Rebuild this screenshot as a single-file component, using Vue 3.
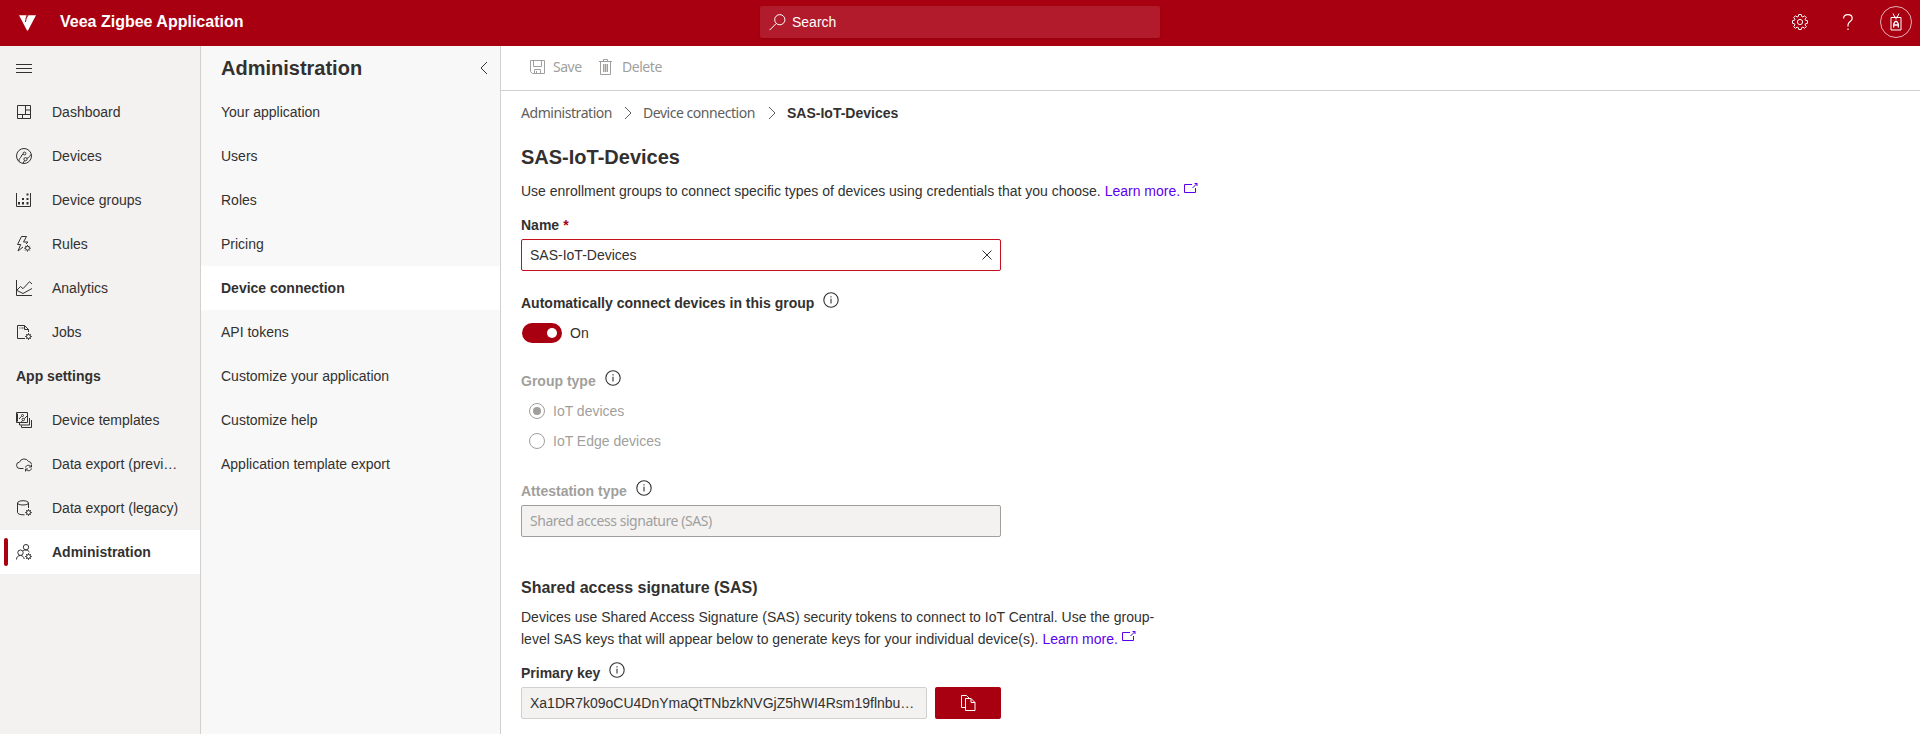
<script setup>
const gear = 'M11.5 8.9v1.2M11.5 14.4v1.2M8.2 12.2h1.2M13.6 12.2h1.2M9.2 9.9l.8.8M13 13.7l.8.8M9.2 14.5l.8-.8M13 10.7l.8-.8M13.5 12.2a2 2 0 1 1-4 0a2 2 0 0 1 4 0'
const gearLow = 'M12.5 9.2v1.3M12.5 14.5v1.3M9.2 12.5h1.3M14.5 12.5h1.3M10.2 10.2l.9.9M13.9 13.9l.9.9M10.2 14.8l.9-.9M13.9 11.1l.9-.9M14.5 12.5a2 2 0 1 1-4 0a2 2 0 0 1 4 0'

const nav = [
  { label: 'Dashboard', d: 'M1.5 1.5h13v13h-13zM1.5 10.5h13M9.5 1.5v9M9.5 6h5M6.5 10.5v4' },
  { label: 'Devices', d: 'M15.5 8a7.5 7.5 0 1 1-15 0a7.5 7.5 0 0 1 15 0M9.9 5.5a1.4 1.4 0 1 1-2.8 0a1.4 1.4 0 0 1 2.8 0M7.3 6.2C4.5 7 5.8 9 4.4 9.8c-1.2.7-1.6 1.7-1.2 3.8M11.1 11.2a1.6 1.6 0 1 1-3.2 0a1.6 1.6 0 0 1 3.2 0M10.8 10.3C14 9.6 12.8 7.8 15.3 6.5M8.5 12.5L7 15.3' },
  { label: 'Device groups', d: 'M.5 1v13.5h14V1', fill: 'M2 10h2v2.5H2zM6 10h2v2.5H6zM10.5 10h2v2.5h-2zM6 6h2v2H6zM10.5 6h2v2h-2zM10.5 1.5h2v2h-2z' },
  { label: 'Rules', d: 'M5.5.5h5L7.5 6h4.500L10 8M5.500.5L1.500 8.500h3.200L2 15l5-4', gear: gear },
  { label: 'Analytics', d: 'M.5 0v15.500H16M1 10l3.500-3.500L7 8.700l6.500-7L16 4M1 10.500l6 3L16 8.500' },
  { label: 'Jobs', d: 'M12.500 8V5.500L8.500 1.500h-7v13h7.500M8.500 1.500v4h4M3.500 4h1M5.500 4h2', gear: gearLow },
  { label: 'App settings', heading: true },
  { label: 'Device templates', d: 'M.5.5h11v10H.5zM3.500 11v2h10V6M5.500 13.500v2h10V8M1.500 1.500v8M7.500 3.500a1 1 0 1 1-2 0a1 1 0 0 1 2 0M5.500 4.300L3 7M8.500 7.500a1.200 1.200 0 1 1-2.400 0a1.200 1.200 0 0 1 2.400 0M8.300 6.700L11 4M6.500 8.500l-1.500 2' },
  { label: 'Data export (previ…', d: 'M7.500 12.500H4a3.200 3.200 0 0 1-.5-6.400A5 5 0 0 1 12.500 5.500a3.300 3.300 0 0 1 3 2.500M9.500 11.500c.5-2.500 4-3 5.500-1M15.500 8.500v2.500H13M15.500 12.500c-.5 2.500-4 3-5.500 1M9.500 15.500V13H12' },
  { label: 'Data export (legacy)', d: 'M12.500 3c0 1.200-2.500 2-5.500 2S1.500 4.200 1.500 3S4 .700 7 .700s5.500 1.100 5.500 2.300V8M1.500 3v9.500c0 1.200 2.500 2.300 5.500 2.300h1.500', gear: gearLow },
  { label: 'Administration', active: true, d: 'M12.700 3.200a2.700 2.700 0 1 1-5.400 0a2.700 2.700 0 0 1 5.400 0M7.200 8.700a2.700 2.700 0 1 1-5.400 0a2.700 2.700 0 0 1 5.400 0M.5 15.500c0-2.500 1.500-4 4-4c2 0 3.200 1.300 3.700 3.500M7 6.800c2-1.500 5.300-.8 6.500 1.500', gear: gearLow },
]

const sub = ['Your application', 'Users', 'Roles', 'Pricing', 'Device connection', 'API tokens', 'Customize your application', 'Customize help', 'Application template export']
</script>

<template>
  <div class="app">
    <header class="top">
      <svg class="logo" width="18" height="16" viewBox="0 0 18 16"><path d="M0 .3h7.500L6.200 4.200 8.700.3H17L9 15.500H8z" fill="#fff" /><path d="M9.500.2C7.500 1.500 6.800 4 6.500 7" stroke="#a80010" fill="none" stroke-width="1" /></svg>
      <div class="brand">Veea Zigbee Application</div>
      <div class="search">
        <svg width="17" height="17" viewBox="0 0 17 17" class="ln"><circle cx="10.800" cy="5.700" r="5.100" /><path d="M7.200 9.500L.5 16.200" /></svg>
        <span>Search</span>
      </div>
      <div class="actions">
        <svg width="16" height="16" viewBox="0 0 16 16" class="ln"><path d="M6.700.5h2.600l.4 2 1.200.5 1.700-1.200 1.700 1.700L13.100 5.200l.5 1.200 1.900.3v2.600l-1.900.4-.5 1.200 1.200 1.700-1.700 1.700-1.700-1.200-1.200.5-.4 1.900H6.700l-.4-1.900-1.200-.5-1.700 1.200-1.700-1.700 1.200-1.700-.5-1.200-1.900-.4V6.700l1.900-.3.5-1.200L1.700 3.500l1.700-1.700L5.100 3l1.200-.5z" /><circle cx="8" cy="8" r="2.600" /></svg>
        <svg class="help" width="10" height="16" viewBox="0 0 10 16"><path d="M.6 4.500C.6 2 2.400.6 4.900.6s4.300 1.500 4.300 3.800C9.200 7.500 5 7.700 5 11v1.500M5 14.500V16" /></svg>
        <div class="avatar"><svg width="12" height="18" viewBox="0 0 12 18" class="ln"><path d="M1 4.500h10v12.500H1z" /><path d="M3 .5L5.200 5M9 .5L6.800 5M6 3.500v3" /><path d="M3.700 14.500V11L5.200 8.500h1.600L8.300 11v3.500M3.700 12h4.600" stroke-width="1.300" /></svg></div>
      </div>
    </header>

    <div class="body">
      <nav class="side">
        <div class="burger"><i></i><i></i><i></i></div>
        <div v-for="n in nav" :key="n.label" class="row" :class="{ active: n.active, heading: n.heading }">
          <svg v-if="n.d" width="16" height="16" viewBox="0 0 16 16" class="ico">
            <path :d="n.d" />
            <path v-if="n.gear" :d="n.gear" />
            <path v-if="n.fill" :d="n.fill" class="solid" />
          </svg>
          <span>{{ n.label }}</span>
        </div>
      </nav>

      <aside class="sub">
        <div class="sub-head">
          <h2>Administration</h2>
          <svg width="8" height="14" viewBox="0 0 8 14" class="ico"><path d="M7 1L1 7l6 6" /></svg>
        </div>
        <div v-for="s in sub" :key="s" class="sub-row" :class="{ active: s === 'Device connection' }">{{ s }}</div>
      </aside>

      <main class="main">
        <div class="tools">
          <svg width="15" height="14" viewBox="0 0 15 14" class="grey"><path d="M.5.5h14v13H2.500l-2-2zM3.500.5v6h8v-6M4.500 13.500v-4h6v4M6.500 11v2.500" /></svg>
          <span class="hum">Save</span>
          <svg class="trash" width="13" height="16" viewBox="0 0 13 16"><path d="M4 5h5v8H4z" class="trash-fill" /><path d="M0 2.500h13M4.500 2V.5h4V2M1.500 2.500v13h10v-13M4.500 5v8M6.500 5v8M8.500 5v8" /></svg>
          <span class="hum del">Delete</span>
        </div>
        <div class="content">
          <div class="crumbs">
            <span class="hum c1">Administration</span>
            <svg width="8" height="14" viewBox="0 0 8 14"><path d="M1 1l6 6-6 6" /></svg>
            <span class="hum c2">Device connection</span>
            <svg width="8" height="14" viewBox="0 0 8 14"><path d="M1 1l6 6-6 6" /></svg>
            <b>SAS-IoT-Devices</b>
          </div>
          <h1>SAS-IoT-Devices</h1>
          <p class="desc">Use enrollment groups to connect specific types of devices using credentials that you choose. <a>Learn more.<svg width="14" height="11" viewBox="0 0 14 11"><path d="M8 1.500H.5v8h11V5M8.500 5L13 .5M10.500.5h2.500V3" /></svg></a></p>
          <div class="label name">Name <em>*</em></div>
          <div class="field edit"><span>SAS-IoT-Devices</span><svg width="10" height="10" viewBox="0 0 10 10" class="ico"><path d="M.5.5l9 9M9.500.5l-9 9" /></svg></div>
          <div class="label auto">Automatically connect devices in this group<svg class="info" width="16" height="16" viewBox="0 0 16 16"><circle cx="8" cy="8" r="7.200" /><path d="M8 6.800v4.700M8 4.300v1.300" /></svg></div>
          <div class="toggle"><div class="pill"><i></i></div><span>On</span></div>
          <div class="label group off">Group type<svg class="info" width="16" height="16" viewBox="0 0 16 16"><circle cx="8" cy="8" r="7.200" /><path d="M8 6.800v4.700M8 4.300v1.300" /></svg></div>
          <div class="radio"><i class="on"></i><span>IoT devices</span></div>
          <div class="radio"><i></i><span>IoT Edge devices</span></div>
          <div class="label attest off">Attestation type<svg class="info" width="16" height="16" viewBox="0 0 16 16"><circle cx="8" cy="8" r="7.200" /><path d="M8 6.800v4.700M8 4.300v1.300" /></svg></div>
          <div class="field disabled"><span class="hum">Shared access signature (SAS)</span></div>
          <h3>Shared access signature (SAS)</h3>
          <p class="sas">Devices use Shared Access Signature (SAS) security tokens to connect to IoT Central. Use the group-<br>level SAS keys that will appear below to generate keys for your individual device(s). <a>Learn more.<svg width="14" height="11" viewBox="0 0 14 11"><path d="M8 1.500H.5v8h11V5M8.500 5L13 .5M10.500.5h2.500V3" /></svg></a></p>
          <div class="label primary">Primary key<svg class="info" width="16" height="16" viewBox="0 0 16 16"><circle cx="8" cy="8" r="7.200" /><path d="M8 6.800v4.700M8 4.300v1.300" /></svg></div>
          <div class="key">
            <div class="field ro"><span>Xa1DR7k09oCU4DnYmaQtTNbzkNVGjZ5hWI4Rsm19flnbu…</span></div>
            <div class="copy"><svg width="15" height="16" viewBox="0 0 15 16" class="ln"><path d="M4.500 12.500h-4V.5h5L8 3M4.500 3.500h5.500l4 4v8H4.500zM10 3.500v4h4" /></svg></div>
          </div>
        </div>
      </main>
    </div>
  </div>
</template>

<style>
body { margin: 0; overflow: hidden; }
</style>

<style scoped>
* { box-sizing: border-box; }
.app { height: 734px; display: flex; flex-direction: column; overflow: hidden; font: 14px/20px "Liberation Sans", Arial, sans-serif; color: #323130; background: #fff; }
svg { flex: none; fill: none; stroke-width: 1; }
h1, h2, h3, p { margin: 0; }
.top { height: 46px; flex: none; background: #a80010; display: flex; align-items: center; color: #fff; padding-bottom: 2px; }
.logo { margin-left: 19px; margin-top: 2px; }
.brand { margin-left: 23px; width: 700px; font-size: 16px; font-weight: 700; }
.search { width: 400px; height: 32px; background: #b11b2b; border-radius: 2px; display: flex; align-items: center; padding-left: 9px; gap: 6px; box-shadow: 0 1px 3px rgba(0, 0, 0, .13); }
.ln { stroke: #fff; }
.actions { margin-left: auto; display: flex; align-items: center; padding-right: 8px; }
.help { margin-left: 35px; margin-right: 27px; stroke: #fff; stroke-width: 1.2; }
.avatar { width: 32px; height: 32px; border: 1px solid #e5b2b7; border-radius: 50%; display: flex; align-items: center; justify-content: center; }
.avatar svg { margin-top: -1px; }
.body { flex: 1; display: flex; min-height: 0; }
.ico { stroke: #323130; }
.solid { fill: #323130; stroke: none; }
.side { width: 201px; background: #f3f2f1; border-right: 1px solid #d2d0ce; }
.burger { height: 44px; padding: 18px 0 0 16px; display: flex; flex-direction: column; gap: 3px; }
.burger i { width: 16px; height: 1px; background: #323130; }
.row { height: 44px; padding: 0 16px; display: flex; align-items: center; gap: 20px; position: relative; }
.row span { white-space: nowrap; }
.heading { font-weight: 700; }
.row.active { background: #fff; font-weight: 700; }
.row.active::before { content: ""; position: absolute; left: 4px; top: 8px; width: 4px; height: 28px; border-radius: 2px; background: #a80010; }
.sub { width: 300px; background: #f8f8f8; border-right: 1px solid #d2d0ce; }
.sub-head { height: 44px; padding: 0 12px 0 20px; display: flex; align-items: center; justify-content: space-between; }
.sub h2, h1 { font-size: 20px; line-height: 28px; font-weight: 700; }
.sub-row { height: 44px; line-height: 44px; padding-left: 20px; }
.sub-row.active { background: #fff; font-weight: 700; }
.main { flex: 1; background: #fff; }
.tools { height: 45px; border-bottom: 1px solid #d2d0ce; padding: 0 0 2px 29px; display: flex; align-items: center; color: #a19f9d; }
.tools svg { stroke: #a19f9d; }
.tools span { margin-left: 8px; width: 30px; }
.trash { margin-left: 16px; }
.tools .del { margin-left: 10px; width: auto; }
.trash-fill { fill: #d2d0ce; stroke: none; }
.hum { font-family: "Noto Sans", "Open Sans", sans-serif; font-size: 14px; letter-spacing: -.46px; white-space: nowrap; }
.content { padding: 8px 0 0 20px; }
.crumbs { height: 28px; display: flex; align-items: center; }
.crumbs svg { stroke: #605e5c; margin: 0 11px 0 12px; }
.crumbs .hum { color: #605e5c; }
.c1 { width: 91px; }
.c2 { width: 113px; }
h1 { margin-top: 16px; }
.desc { margin-top: 9px; line-height: 22px; }
a { color: #5c00f0; }
a svg { stroke: #5c00f0; margin-left: 4px; vertical-align: 2px; }
.label { font-weight: 700; height: 20px; display: flex; align-items: center; }
.label em { color: #a80010; font-style: normal; margin-left: 4px; }
.label.off { color: #a19f9d; }
.info { margin-left: 9px; margin-top: -7px; stroke: #323130; stroke-width: 1.1; }
.name { margin-top: 13px; }
.field { width: 480px; height: 32px; border: 1px solid #a19f9d; border-radius: 2px; display: flex; align-items: center; justify-content: space-between; padding: 0 8px; }
.edit { margin-top: 4px; border-color: #c50f1f; }
.auto { margin-top: 22px; }
.toggle { margin-top: 10px; height: 20px; display: flex; gap: 8px; padding-left: 1px; }
.pill { width: 40px; height: 20px; border-radius: 10px; background: #a80010; padding: 5px; display: flex; justify-content: flex-end; }
.pill i { width: 10px; height: 10px; background: #fff; border-radius: 50%; }
.group { margin-top: 28px; margin-bottom: 5px; }
.radio { height: 30px; display: flex; align-items: center; gap: 8px; padding-left: 8px; color: #a19f9d; }
.radio i { width: 16px; height: 16px; border: 1px solid #a19f9d; border-radius: 50%; display: flex; align-items: center; justify-content: center; }
.radio .on::after { content: ""; width: 8px; height: 8px; border-radius: 50%; background: #a19f9d; }
.attest { margin-top: 25px; }
.disabled { margin-top: 4px; background: #f3f2f1; color: #a19f9d; }
h3 { margin-top: 40px; font-size: 16px; line-height: 22px; }
.sas { margin-top: 7px; line-height: 22px; }
.primary { margin-top: 13px; }
.key { margin-top: 4px; display: flex; gap: 8px; }
.ro { width: 406px; background: #f3f2f1; border-color: #d2d0ce; white-space: nowrap; }
.copy { width: 66px; height: 32px; background: #a80010; border-radius: 2px; display: flex; align-items: center; justify-content: center; }
</style>
